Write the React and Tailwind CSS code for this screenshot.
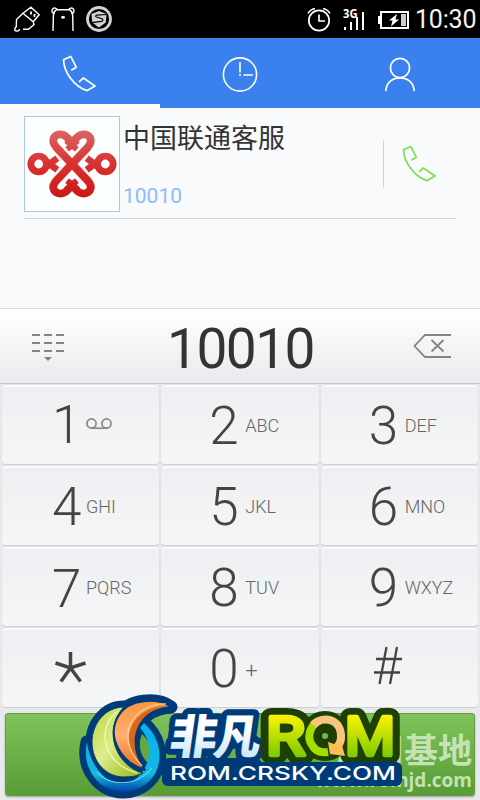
import clsx from 'clsx'

const keys = [
  { digit: '1', voicemail: true },
  { digit: '2', letters: 'ABC' },
  { digit: '3', letters: 'DEF' },
  { digit: '4', letters: 'GHI' },
  { digit: '5', letters: 'JKL' },
  { digit: '6', letters: 'MNO' },
  { digit: '7', letters: 'PQRS' },
  { digit: '8', letters: 'TUV' },
  { digit: '9', letters: 'WXYZ' },
  { digit: '*' },
  { digit: '0', letters: '+' },
  { digit: '#' },
]

function PhoneIcon({ className }) {
  return (
    <svg viewBox="0 0 36 38" className={className} fill="none" stroke="currentColor" strokeWidth="1.7" strokeLinejoin="round">
      <path d="M9.2 15.2 14.2 12.2 8.7 1.4 1.6 4.8C1.4 15.5 11.5 32 25.2 35.6L33 31 21.4 23 17 26.8" />
    </svg>
  )
}

function StatusBar() {
  return (
    <div className="flex h-[38px] items-center justify-between bg-black text-white">
      <svg viewBox="0 0 114 38" className="h-[38px] w-[114px]" fill="none" stroke="#fff" strokeWidth="1.4">
        {/* usb plug */}
        <path d="M31 7.2 39.2 14.8 33.2 21.8 23 13.2ZM23 13.2 16.5 19.5 16.3 26.5 15 28.5Q14 31.2 17 31Q19.6 31 19.4 29M33.2 21.8 34 24.5 28.5 29.3H23" />
        <path d="M31 11.5v3M34.5 14v3" strokeWidth="1.8" />
        {/* bear */}
        <path d="M53 31 53.4 15.5Q53.5 11.5 56.5 9.7H69.5Q72.5 11.5 72.7 15.5L73 31" />
        <path d="M53.2 13.2A2.8 2.8 0 1 1 57.2 9.5M72.8 13.2A2.8 2.8 0 1 0 68.8 9.5" />
        <ellipse cx="63" cy="17.3" rx="2" ry="1.4" fill="#fff" stroke="none" />
        {/* security badge */}
        <circle cx="99" cy="19" r="11.5" stroke="#d2d2d2" strokeWidth="2.8" />
        <path d="M91.5 14 99 11 106.5 14 105.8 22.5 99 27.5 92.2 22.5Z" fill="#d2d2d2" stroke="none" />
        <path d="M107 14.5 96.5 15.2Q94.5 16 96.5 17L102 18.8Q104 20.4 101.5 21.4L91.5 22.6" stroke="#000" strokeWidth="1.2" />
      </svg>
      <div className="flex items-center">
        <svg viewBox="0 0 108 38" className="h-[38px] w-[108px]" fill="none" stroke="#fff">
          <circle cx="12" cy="20.5" r="10.2" strokeWidth="1.7" />
          <path d="M12 14.5V21H18" strokeWidth="1.7" />
          <path d="M1 13.5Q3 9.5 8 8.5M16 8.5Q21 9.5 23 13.5" strokeWidth="1.6" />
          <text x="36" y="17.8" fill="#fff" stroke="none" className="font-['Open_Sans',sans-serif] text-[12.5px] font-bold" textLength="14.5" lengthAdjust="spacingAndGlyphs">3G</text>
          <path d="M38 27v3M44 22v8M50 17v13M56 12v18" strokeWidth="2" />
          <path d="M74 12H101V28H74ZM73 17H72V23H73" strokeWidth="2" />
          <path d="M94 14h5v12h-5z" fill="#ccc" stroke="none" />
          <path d="M90 14 82 20.500H85.500L84 26.500 92 19.400H88.500Z" fill="#fff" stroke="none" />
        </svg>
        <span className="w-[65px] text-[25px] leading-none tracking-[-0.2px] text-[#f4f4f4]">10:30</span>
      </div>
    </div>
  )
}

function Tabs() {
  return (
    <div className="grid h-[70px] grid-cols-3 bg-[#3a80ee] text-white">
      <div className="flex justify-center border-b-4 border-white pt-[17px]">
        <PhoneIcon className="h-[38px] w-[36px]" />
      </div>
      <div className="flex justify-center pt-[18px]">
        <svg viewBox="0 0 36 36" className="size-[36px]" fill="none" stroke="currentColor" strokeWidth="1.6">
          <circle cx="18" cy="18.5" r="16.6" />
          <path d="M18 6v10.5M18 18v2M21.5 19H31" />
        </svg>
      </div>
      <div className="flex justify-center pt-[18px]">
        <svg viewBox="0 0 32 36" className="h-[36px] w-[32px]" fill="none" stroke="currentColor" strokeWidth="1.7">
          <circle cx="16" cy="12" r="9.6" />
          <path d="M1.8 35C2.5 26.5 8.5 21.8 16 21.8S29.5 26.5 30.2 35" />
        </svg>
      </div>
    </div>
  )
}

function Avatar() {
  return (
    <svg viewBox="0 0 96 96" className="size-[96px] border border-[#aecbd0] bg-[#fbfefe]" fill="none">
      <defs>
        <linearGradient id="red" gradientUnits="userSpaceOnUse" x1="0" y1="14" x2="0" y2="82">
          <stop offset="0" stopColor="#dc6464" />
          <stop offset="0.5" stopColor="#d93030" />
          <stop offset="1" stopColor="#cc1a16" />
        </linearGradient>
      </defs>
      <g stroke="url(#red)">
        {/* side rings */}
        <circle cx="14" cy="48" r="8" strokeWidth="7" />
        <circle cx="82" cy="48" r="8" strokeWidth="7" />
        <path d="M21 45 33 54M21 51 33 42M75 45 63 54M75 51 63 42" strokeWidth="7" />
        <path d="M42 24 53 33M54 24 43 33M43 65 54 74M53 65 42 74" strokeWidth="6" />
      </g>
      {/* crossing bands with a light edge */}
      <path d="M31 30 65.5 66M65 30 30.5 66" stroke="#fbeeec" strokeWidth="10" />
      <path
        d="M48 48 32 31C25.500 23 30 17.800 36.500 17.800C41 17.800 43 21 48 26C53 21 55 17.800 59.500 17.800C66 17.800 70.500 23 64 31L32 65C25.500 72 30 78.200 36.500 78.200C41 78.200 43 75 48 70C53 75 55 78.200 59.500 78.200C66 78.200 70.500 72 64 65Z"
        stroke="url(#red)"
        strokeWidth="8"
      />
    </svg>
  )
}

function Contact() {
  return (
    <div className="h-[200px] bg-[#f9fafc] px-6 pt-2">
      <div className="flex h-[103px] border-b border-[#d0d3d6]">
        <Avatar />
        <div className="ml-[3px] w-[260px]">
          <p className="mt-[7px] font-['Noto_Sans_CJK_SC',sans-serif] text-[27px] leading-[27px] text-[#333]">中国联通客服</p>
          <p className="mt-[34px] text-[21px] leading-[24px] text-[#8ebcfa]">10010</p>
        </div>
        <div className="mt-6 h-12 w-px bg-[#d0d3d6]" />
        <PhoneIcon className="mt-[29px] ml-[18px] h-[38px] w-[36px] text-[#7be052]" />
      </div>
    </div>
  )
}

function NumberField() {
  return (
    <div className="flex h-[76px] items-start justify-between border-y border-t-[#d8d9db] border-b-[#c5c6c9] bg-linear-to-b from-white to-[#e9eaed] pr-[29px] pl-8">
      <svg viewBox="0 0 32 28" className="mt-[24px] h-[28px] w-[32px]" fill="none" stroke="#848484">
        <path d="M0 2H32M0 10H32M0 18H32" strokeWidth="2" strokeDasharray="8 4" />
        <path d="M12 24h8l-4 4z" fill="#848484" stroke="none" />
      </svg>
      <span className="mt-[12px] ml-[4px] text-[55px] leading-[56px] tracking-[-1.5px] text-[#333]">10010</span>
      <svg viewBox="0 0 38 26" className="mt-[24px] h-[26px] w-[38px]" fill="none" stroke="#848484" strokeWidth="1.8">
        <path d="M38 2H12L1.5 13 12 24H38M18.5 7 30.5 18.5M30.5 7 18.5 18.5" />
      </svg>
    </div>
  )
}

function Key({ digit, letters, voicemail }) {
  const symbol = digit === '*' || digit === '#'
  return (
    <div className="flex h-[79px] rounded-[4px] border-t-2 border-t-white/60 bg-linear-to-b from-[#eeeff2] to-[#f5f6f6] pl-[48px] shadow-[0_1px_1px_#cbcdcf,0_0_2px_#dcdee0]">
      {symbol ? (
        <svg viewBox="0 0 40 60" className="mt-[8px] h-[60px] w-[40px]" fill="none" stroke="#444">
          {digit === '*' ? (
            <path d="M20.5 14V30M5.5 25 20.5 30 35.5 25M20.5 30 11 43.5M20.5 30 30.5 43.5" strokeWidth="3.5" />
          ) : (
            <path d="M17.5 9 10.5 46M28 9 21 46M7 21H33M5 34.5H31" strokeWidth="2.3" />
          )}
        </svg>
      ) : (
        <span
          className={clsx(
            "w-[31px] pt-[9px] font-['Roboto'] text-[53px] leading-[60px] font-light text-[#444]",
            digit === '1' && '-mt-px pl-[2px]',
            digit === '7' && 'pl-[2px] pt-[10px]',
            digit === '4' && 'pl-[2px]',
          )}
        >
          {digit}
        </span>
      )}
      {letters && (
        <span
          className={clsx(
            'ml-[5px] pt-[27px] text-[18px] leading-[24px] font-light text-[#666]',
            letters === '+' && 'pt-[29px] text-[22px]',
          )}
        >
          {letters}
        </span>
      )}
      {voicemail && (
        <svg viewBox="0 0 26 12" className="mt-[31px] ml-[5px] h-[12px] w-[26px]" fill="none" stroke="#888" strokeWidth="1.7">
          <circle cx="5.5" cy="5.5" r="4.6" />
          <circle cx="20.5" cy="5.5" r="4.6" />
          <path d="M5 10.2H21" />
        </svg>
      )}
    </div>
  )
}

const ring = 'M87 52C81 78 99 102 123 102C159 101 173 59 144 33L140 38C156 55 150 83 129 93C108 98 90 77 87 52Z'
const leaf = 'M124 17C105 17 92 34 92 52C92 72 106 87 124 87C131 87 138 86 143 83C116 76 102 40 124 17Z'
const flame = 'M171 17C157 7 129 9 119 25C105 47 122 73 145 80C126 59 131 20 171 17Z'

function SiteMark() {
  return (
    <svg viewBox="0 0 405 110" className="absolute bottom-0 left-0 h-[110px] w-[405px]" fill="none" strokeLinejoin="round">
      <defs>
        <linearGradient id="lime" x1="0" y1="0" x2="1" y2="1">
          <stop offset="0" stopColor="#b9d63c" />
          <stop offset="0.45" stopColor="#deec8c" />
          <stop offset="1" stopColor="#8fb80a" />
        </linearGradient>
        <linearGradient id="orange" x1="0.5" y1="0" x2="0.5" y2="1">
          <stop offset="0" stopColor="#f99440" />
          <stop offset="0.5" stopColor="#ffb070" />
          <stop offset="1" stopColor="#e96c18" />
        </linearGradient>
        <linearGradient id="blue" x1="0" y1="0" x2="0" y2="1">
          <stop offset="0" stopColor="#08b0ee" />
          <stop offset="0.75" stopColor="#14b8e0" />
          <stop offset="1" stopColor="#0040a8" />
        </linearGradient>
        <linearGradient id="romFill" gradientUnits="userSpaceOnUse" x1="0" y1="24" x2="0" y2="68">
          <stop offset="0" stopColor="#fff500" />
          <stop offset="1" stopColor="#7ac800" />
        </linearGradient>
        <linearGradient id="ice" gradientUnits="userSpaceOnUse" x1="0" y1="24" x2="0" y2="68">
          <stop offset="0.3" stopColor="#fff" />
          <stop offset="1" stopColor="#c9e6fa" />
        </linearGradient>
      </defs>

      {/* swirl */}
      <g fill="#003b79" stroke="#003b79" strokeWidth="13">
        <path d={ring} />
        <path d={leaf} />
        <path d={flame} />
      </g>
      <path d="M96 40 120 30 139 82 128 94 100 84Z" fill="#003b79" />
      {/* gap between the flame and the ring */}
      <path d="M142 44C137 55 141 67 148 73C153 62 150 51 142 44Z" fill="#64a842" />
      <path d={ring} fill="url(#blue)" />
      <path d="M97 82C106 94 134 100 152 78" stroke="#7be4f4" strokeWidth="1" />
      <path d={leaf} fill="url(#lime)" stroke="#003b79" strokeWidth="1" />
      <path d="M118 21C95 38 103 74 137 83" stroke="#f5f7be" strokeWidth="1.2" />
      <path d={flame} fill="url(#orange)" stroke="#003b79" strokeWidth="2" />
      <path d="M168 16C138 14 112 46 143 77C127 57 133 21 168 16" fill="#d9661b" />
      <path d="M166 14C136 13 111 44 142 76" stroke="#ffcf9c" strokeWidth="1.2" />

      {/* wordmark */}
      <g className="font-['Noto_Sans_CJK_SC',sans-serif] text-[47px] font-black" transform="skewX(-8)">
        <text x="177" y="64" stroke="#003b79" strokeWidth="12" textLength="91">非凡</text>
        <text x="177" y="64" fill="url(#ice)" textLength="91">非凡</text>
      </g>
      <rect x="162" y="68" width="100" height="28" rx="7" fill="#003b79" />

      <g className="font-['Roboto'] text-[54px] font-normal">
        <g stroke="#1d4005" strokeWidth="18">
          <text x="266" y="65" textLength="39" lengthAdjust="spacingAndGlyphs">R</text>
          <circle cx="325" cy="46" r="14" strokeWidth="22" />
          <text x="345" y="65" textLength="50" lengthAdjust="spacingAndGlyphs">M</text>
        </g>
        <g fill="url(#romFill)" stroke="url(#romFill)" strokeWidth="4.5">
          <text x="266" y="65" textLength="39" lengthAdjust="spacingAndGlyphs">R</text>
          <text x="345" y="65" textLength="50" lengthAdjust="spacingAndGlyphs">M</text>
        </g>
      </g>
      <path d="M319 31C309 36 307 48 312 55C315 61 321 63 328 62" stroke="#a6dc00" strokeWidth="8" />
      <path d="M313 35C322 25 342 28 341 48C341 51 340 53 338 56" stroke="#f9c47c" strokeWidth="8" />
      <path d="M328 52 334 54 341 52 345 66 330 64Z" fill="#ffbd52" />

      <rect x="162" y="72" width="240" height="24" rx="6" fill="#003b79" />
      <text x="170" y="90" fill="#fff" className="font-['Inter'] text-[19px] font-medium" textLength="226" lengthAdjust="spacingAndGlyphs">ROM.CRSKY.COM</text>
    </svg>
  )
}

export default function App() {
  return (
    <div className="relative h-[800px] w-[480px] overflow-hidden bg-[#e9eaec] font-['Roboto',sans-serif]">
      <StatusBar />
      <Tabs />
      <Contact />
      <NumberField />
      <div className="grid grid-cols-3 gap-x-[2px] gap-y-[2px] px-[2px] pt-px">
        {keys.map((key) => (
          <Key key={key.digit} {...key} />
        ))}
      </div>
      <div className="mt-[6px] ml-[5px] flex h-[83px] w-[470px] flex-col items-end rounded-[3px] border border-[#679c49] bg-linear-to-b from-[#80c35b] to-[#579c34] pt-[18px] pr-[2px] text-[#c5e2b5] shadow-[0_1px_2px_#999]">
        <span className="font-['Noto_Sans_CJK_SC',sans-serif] text-[34px] leading-[34px] font-bold">应用基地</span>
        <span className="mt-[3px] font-['Open_Sans'] text-[19px] leading-[22px] font-bold">www.romjd.com</span>
      </div>
      <SiteMark />
    </div>
  )
}
